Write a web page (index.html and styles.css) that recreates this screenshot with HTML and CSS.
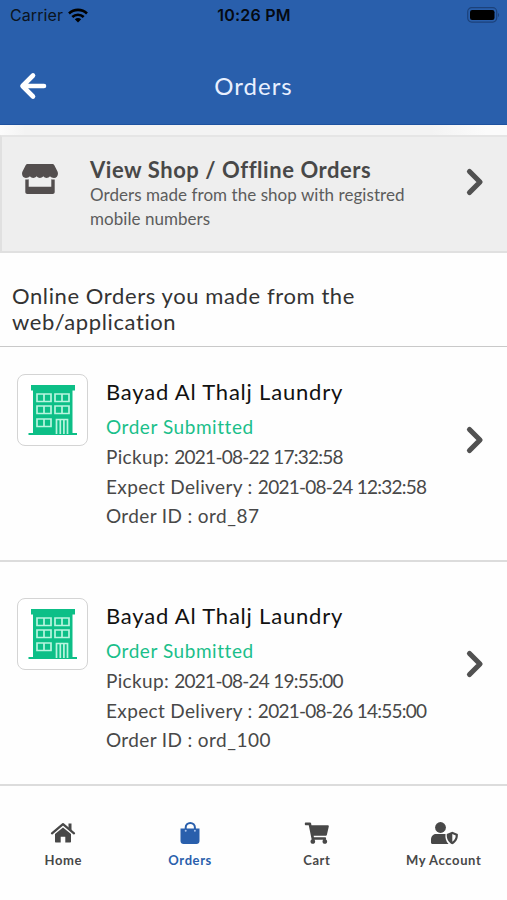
FILE: index.html
```html
<!DOCTYPE html>
<html lang="en">
<head>
    <meta charset="UTF-8">
    <title>Orders</title>
    <link rel="stylesheet" href="styles.css">
</head>
<body>
    <svg class="defs" width="0" height="0">
        <symbol id="chevron" viewBox="0 0 20 30">
            <path d="M4.500 4.500L15 15 4.500 25.500" fill="none" stroke="currentColor" stroke-width="5.200" stroke-linecap="round" stroke-linejoin="round"/>
        </symbol>
        <symbol id="building" viewBox="0 0 50 52">
            <path fill="#0dbf87" d="M3 1h44v5.500h-2.500V49H49v2H.5v-2H5V6.500H3z"/>
            <g fill="#0dbf87" stroke="#b9f5df" stroke-width="1.700">
                <path d="M9 10h14v7.500H9zM27 10h14v7.500H27zM9 22h14v7.500H9zM27 22h14v7.500H27zM9 35h14v7.500H9zM16 10v7.500M34 10v7.500M16 22v7.500M34 22v7.500M16 35v7.500"/>
                <path d="M28.500 50V35.500h11V50M32.300 36v14M35.900 36v14"/>
            </g>
        </symbol>
    </svg>

    <header class="header">
        <div class="status-bar">
            <div class="carrier">
                <span>Carrier</span>
                <svg width="20" height="15" viewBox="0 0 20 15">
                    <g fill="none" stroke="#000" stroke-width="2.600">
                        <path d="M1 5.500C6 .7 14 .7 19 5.500"/>
                        <path d="M4.300 9C7.500 5.900 12.500 5.900 15.700 9"/>
                    </g>
                    <path d="M6.800 11.300C8.600 9.600 11.400 9.600 13.200 11.300L10 14.600z"/>
                </svg>
            </div>
            <div class="time">10:26 PM</div>
            <svg class="battery" width="33" height="16" viewBox="0 0 33 16">
                <rect x=".7" y=".7" width="29" height="14.400" rx="4" fill="none" stroke="#1c427b" stroke-width="1.200"/>
                <rect x="3" y="3" width="24.500" height="10" rx="2.200"/>
                <path d="M31 6c1.500.5 1.500 3.500 0 4z" fill="#1c427b"/>
            </svg>
        </div>
        <div class="title-bar">
            <svg class="back" width="28" height="28" viewBox="0 0 28 28">
                <path d="M14 3.500L3.500 14 14 24.500M4 14h21" fill="none" stroke="#fff" stroke-width="4.600" stroke-linecap="round" stroke-linejoin="round"/>
            </svg>
            <h1 class="title">Orders</h1>
        </div>
    </header>
    <div class="strip"></div>

    <section class="shop">
        <svg class="shop-icon" width="36" height="32" viewBox="0 0 36 32">
            <path fill="#534e4e" d="M5.500 1h25c.8 0 1.300.4 1.700 1L35.500 8.500c1.300 3-.3 6.300-3.500 6.500-1.700 0-3-.6-4-1.700-1.900 2.200-4.900 2.200-6.700 0-1.900 2.200-4.900 2.200-6.700 0-1.900 2.200-4.900 2.200-6.700 0-1 1.100-2.300 1.700-4 1.700C.7 14.700-.8 11.500.5 8.500L3.800 2c.4-.6.900-1 1.700-1z"/>
            <path fill="#534e4e" d="M3.300 16.500c1 .2 2.200.1 3.400-.2v7.500h22.600v-7.500c1.200.3 2.300.4 3.400.2V29c0 1.200-.8 2-2 2H5.300c-1.200 0-2-.8-2-2z"/>
        </svg>
        <div class="shop-text">
            <h2 class="shop-title">View Shop / Offline Orders</h2>
            <p class="shop-desc">Orders made from the shop with registred<br>mobile numbers</p>
        </div>
        <svg class="arrow" width="20" height="30"><use href="#chevron"/></svg>
    </section>

    <h2 class="online">Online Orders you made from the<br>web/application</h2>

    <main>
        <article class="order first">
            <div class="thumb"><svg width="50" height="52"><use href="#building"/></svg></div>
            <div class="info">
                <h3 class="name">Bayad Al Thalj Laundry</h3>
                <p class="state">Order Submitted</p>
                <p>Pickup: <span class="date">2021-08-22 17:32:58</span></p>
                <p>Expect Delivery : <span class="date">2021-08-24 12:32:58</span></p>
                <p>Order ID : <span class="order-id">ord_87</span></p>
            </div>
            <svg class="arrow" width="20" height="30"><use href="#chevron"/></svg>
        </article>
        <article class="order">
            <div class="thumb"><svg width="50" height="52"><use href="#building"/></svg></div>
            <div class="info">
                <h3 class="name">Bayad Al Thalj Laundry</h3>
                <p class="state">Order Submitted</p>
                <p>Pickup: <span class="date">2021-08-24 19:55:00</span></p>
                <p>Expect Delivery : <span class="date">2021-08-26 14:55:00</span></p>
                <p>Order ID : <span class="order-id">ord_100</span></p>
            </div>
            <svg class="arrow" width="20" height="30"><use href="#chevron"/></svg>
        </article>
    </main>

    <nav class="tabs">
        <a class="tab">
            <svg width="26" height="24" viewBox="0 0 26 24">
                <path d="M2 12.300L13 3.200l11 9.100" fill="none" stroke="currentColor" stroke-width="2.300" stroke-linecap="round" stroke-linejoin="round"/>
                <path fill="currentColor" d="M18.500 2.500h3v7l-3-2.500zM13 6.400l8 6.700v7.400c0 .6-.4 1-1 1h-4.700v-5.800h-4.600v5.800H6c-.6 0-1-.4-1-1v-7.400z"/>
            </svg>
            <span>Home</span>
        </a>
        <a class="tab active">
            <svg width="26" height="24" viewBox="0 0 26 24">
                <path d="M8.700 10V6.500a4.600 4.600 0 0 1 9.200 0V10" fill="none" stroke="currentColor" stroke-width="2"/>
                <path fill="currentColor" d="M3.500 7.500h19V20c0 1.700-1.300 3-3 3h-13c-1.700 0-3-1.300-3-3z"/>
                <circle cx="8.700" cy="9.700" r="1" fill="#a9c3ec"/>
                <circle cx="17.900" cy="9.700" r="1" fill="#a9c3ec"/>
            </svg>
            <span>Orders</span>
        </a>
        <a class="tab">
            <svg width="26" height="24" viewBox="-20 -36 624 576">
                <path fill="currentColor" d="M528.12 301.319l47.273-208C578.806 78.301 567.391 64 551.99 64H159.208l-9.166-44.810C147.758 8.021 137.930 0 126.529 0H24C10.745 0 0 10.745 0 24v16c0 13.255 10.745 24 24 24h69.883l70.248 343.435C147.325 417.100 136 435.222 136 456c0 30.928 25.072 56 56 56s56-25.072 56-56c0-15.674-6.447-29.835-16.824-40h209.647C430.447 426.165 424 440.326 424 456c0 30.928 25.072 56 56 56s56-25.072 56-56c0-22.172-12.888-41.332-31.579-50.405l5.517-24.276c3.413-15.018-8.002-29.319-23.403-29.319H218.117l-6.545-32h293.145c11.206 0 20.920-7.754 23.403-18.681z"/>
            </svg>
            <span>Cart</span>
        </a>
        <a class="tab">
            <svg width="28" height="24" viewBox="0 0 28 24">
                <circle cx="10.500" cy="6.500" r="5.400" fill="currentColor"/>
                <path fill="currentColor" d="M6 13h9.500c-.5 4 .5 7.500 3 10H2.500C1.600 23 1 22.400 1 21.500V19c0-3.500 2-6 5-6z"/>
                <path fill="currentColor" fill-rule="evenodd" d="M22.300 10.700l5.500 2.200c.5 4.600-1.800 8.600-5.500 10.300-3.700-1.700-6-5.700-5.500-10.300zM22.300 13v7.700c2.200-1.400 3.400-3.700 3.400-6.300z"/>
            </svg>
            <span>My Account</span>
        </a>
    </nav>
</body>
</html>
```
FILE: styles.css
```css
* {
    box-sizing: border-box;
}
body {
    margin: 0;
    height: 900px;
    overflow: hidden;
    display: flex;
    flex-direction: column;
    font-family: Lato, sans-serif;
    font-variant-ligatures: none;
    background-color: #fefefe;
    color: #484848;
}
h1, h2, h3, p {
    margin: 0;
    font-weight: normal;
    white-space: nowrap;
}
svg {
    flex: none;
}
.defs {
    position: absolute;
}
.header {
    height: 125px;
    flex: none;
    background-color: #295fac;
    border-bottom: 1px solid #1e529f;
}
.status-bar {
    display: grid;
    grid-template-columns: 1fr auto 1fr;
    align-items: center;
    height: 30px;
    padding: 0 7px 0 10px;
    font-family: Inter, sans-serif;
    font-size: 16px;
    color: #0b1420;
}
.carrier {
    display: flex;
    align-items: center;
    gap: 5px;
    letter-spacing: 0.1px;
}
.time {
    margin-right: 2px;
    font-weight: 600;
    letter-spacing: 0.2px;
    color: #050a12;
}
.battery {
    justify-self: end;
}
.title-bar {
    display: grid;
    grid-template-columns: 1fr auto 1fr;
    align-items: center;
    height: 56px;
    margin-top: 28px;
    padding: 0 19px;
}
.title {
    margin-top: -2px;
    font-size: 24px;
    color: #e8f0ff;
    letter-spacing: 1px;
}
.strip {
    flex: none;
    height: 10px;
    background: linear-gradient(to right, #fcfcfc, #f3f3f3 5%, #f3f3f3 85%, #fbfbfb 96%);
}
.shop {
    display: flex;
    flex: none;
    height: 118px;
    padding: 20px 22px 0;
    background-color: #eeeeee;
    border: 2px solid #e0e0e0;
    border-top-color: #e5e5e5;
    border-right: none;
}
.shop-icon {
    margin: 6px 32px 0 -2px;
}
.shop-text {
    flex: 1;
}
.shop-title {
    font-size: 22px;
    line-height: 26px;
    font-weight: bold;
    letter-spacing: 0.55px;
}
.shop-desc {
    font-size: 17px;
    line-height: 24px;
    letter-spacing: 0.05px;
    color: #5c5c5c;
}
.shop .arrow {
    margin: 10px 0 0;
}
.arrow {
    color: #515151;
}
.online {
    flex: none;
    height: 94px;
    padding: 30px 12px 0;
    font-size: 22px;
    line-height: 26px;
    letter-spacing: 0.6px;
    color: #333;
    border-bottom: 1px solid #c9c9c9;
}
.order {
    display: flex;
    height: 224px;
    padding: 36px 22px 0 17px;
    border-bottom: 2px solid #dcdcdc;
}
.first {
    height: 215px;
    padding-top: 27px;
}
.thumb {
    display: flex;
    flex: none;
    justify-content: center;
    align-items: center;
    width: 71px;
    height: 72px;
    border: 1px solid #d4d4d4;
    border-radius: 8px;
    background-color: #fff;
}
.info {
    flex: 1;
    margin-top: -1px;
    margin-left: 18px;
    font-size: 19px;
    line-height: 29.700px;
    letter-spacing: 0.35px;
}
.name {
    font-size: 22px;
    line-height: 38px;
    color: #111;
    letter-spacing: 0.8px;
}
.state {
    line-height: 31px;
    color: #1abf8a;
    letter-spacing: 0.55px;
}
.date {
    letter-spacing: -0.75px;
}
.order-id {
    letter-spacing: 0.5px;
}
.order .arrow {
    margin-top: 51px;
}
.tabs {
    display: grid;
    grid-template-columns: repeat(4, 1fr);
    padding-top: 35px;
}
.tab {
    display: flex;
    flex-direction: column;
    align-items: center;
    gap: 5px;
    font-size: 13px;
    line-height: 20px;
    font-weight: bold;
    letter-spacing: 0.6px;
    white-space: nowrap;
}
.active {
    color: #295fac;
}
```
